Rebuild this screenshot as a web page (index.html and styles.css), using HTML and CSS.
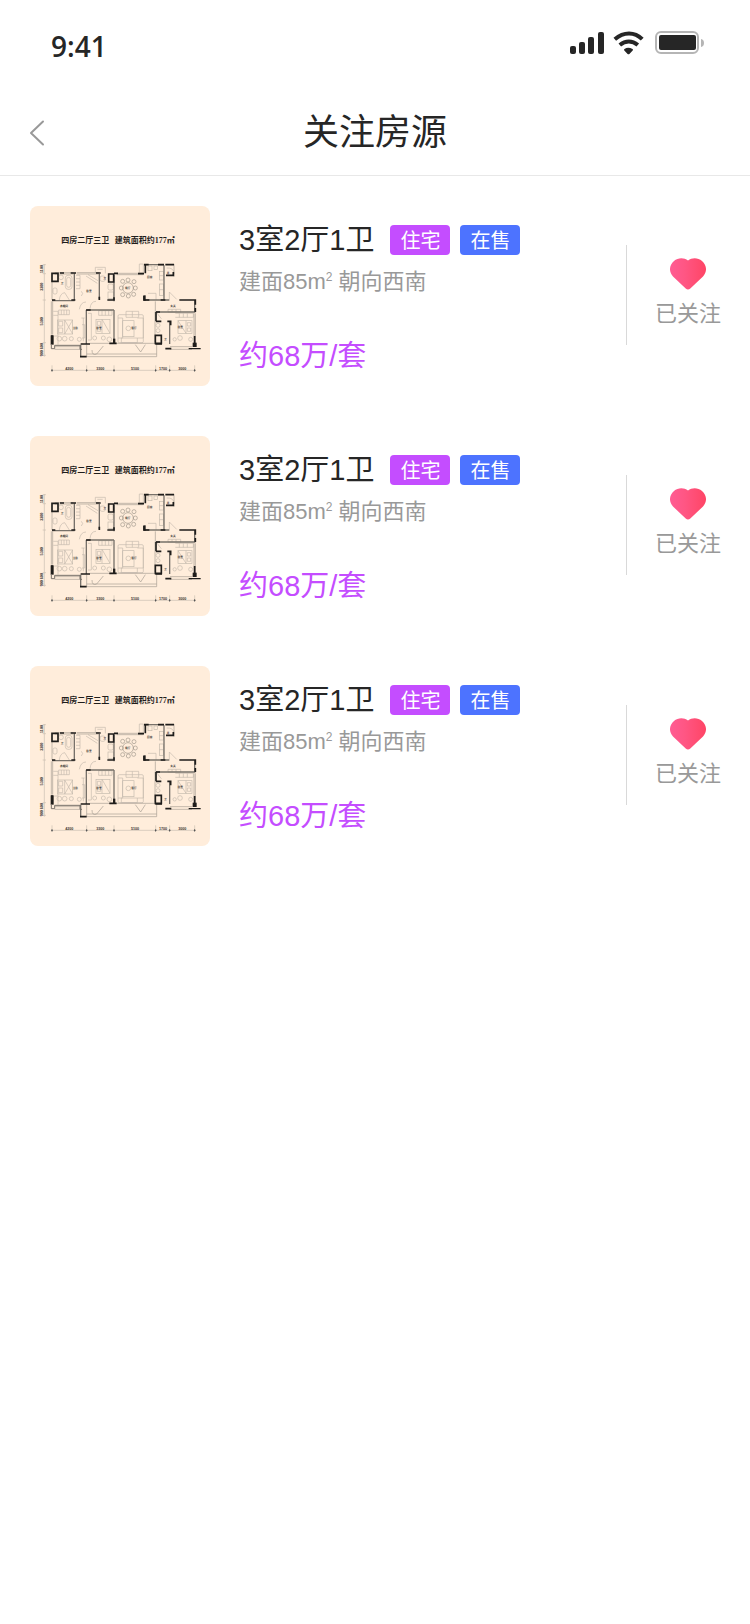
FILE: index.html
```html
<!DOCTYPE html>
<html lang="zh-CN">
<head>
    <meta charset="UTF-8">
    <meta name="viewport" content="width=device-width, initial-scale=1.0">
    <title>关注房源</title>
    <link rel="stylesheet" href="styles.css">
</head>
<body>
    <!-- 公用图形 -->
    <svg class="defs" width="0" height="0" aria-hidden="true">
        <defs>
            <linearGradient id="heartFill" x1="0" y1="0" x2="1" y2="0">
                <stop offset="0" stop-color="#ff5c93"/>
                <stop offset="0.4" stop-color="#ff5684"/>
                <stop offset="1" stop-color="#ff4565"/>
            </linearGradient>
        </defs>
        <symbol id="heart" viewBox="0 0 36 32">
            <path fill="url(#heartFill)" d="M18 2.6C22 -0.6 28 -0.4 32 3C37 7.500 37.300 13.500 33 18.500L20.300 30.600Q18 32.300 15.700 30.600L3 18.500C-1.300 13.500 -1 7.500 4 3C8 -0.400 14 -0.600 18 2.600Z"/>
        </symbol>
        <symbol id="plan" viewBox="30 30 540 540">
            <rect x="30" y="30" width="540" height="540" fill="#ffeddb"/>
            <g class="plan-title">
                <text x="124" y="142">四房二厅三卫</text>
                <text x="284" y="142">建筑面积约177㎡</text>
            </g>
            <!-- 尺寸线 -->
            <g stroke="#c9beb1" stroke-width="2" fill="none">
                <path d="M73 204V482M68 206h10M68 233h10M68 312h10M68 440h10M68 478h10"/>
                <path d="M94 523H526M96 508v20M200 508v20M282 508v20M407 508v20M449 508v20M524 508v20"/>
            </g>
            <g fill="#555" stroke="none">
                <path d="M93 523l3-4 3 4-3 4zM197 523l3-4 3 4-3 4zM279 523l3-4 3 4-3 4zM404 523l3-4 3 4-3 4zM446 523l3-4 3 4-3 4zM521 523l3-4 3 4-3 4z"/>
            </g>
            <g class="plan-size">
                <text x="148" y="521">4200</text>
                <text x="241" y="521">3300</text>
                <text x="345" y="521">5100</text>
                <text x="429" y="521">1700</text>
                <text x="487" y="521">3000</text>
                <text transform="translate(69 219) rotate(-90)">1100</text>
                <text transform="translate(69 272) rotate(-90)">3300</text>
                <text transform="translate(69 376) rotate(-90)">5300</text>
                <text transform="translate(69 461) rotate(-90)">900 600</text>
            </g>
            <!-- 家具 -->
            <g stroke="#c4baad" stroke-width="2" fill="none">
                <rect x="136" y="238" width="20" height="42" rx="8"/>
                <rect x="140" y="244" width="12" height="30" rx="6"/>
                <circle cx="123" cy="244" r="7"/>
                <rect x="99" y="276" width="12" height="18" rx="5"/>
                <path d="M168 238h12v40h-12M168 248h12M168 258h12M168 268h12M198 240l34 22M204 236l30 18M184 286q8 6 0 14M118 312q2 -20 16 -22l14 22"/>
                <rect x="240" y="240" width="16" height="16" rx="6"/>
                <rect x="264" y="264" width="16" height="18" rx="5"/>
                <rect x="264" y="288" width="16" height="20"/>
                <path d="M210 338q2 -22 18 -22M226 214h30v18M226 214v18M232 220h16"/>
                <path d="M116 342h32v14h-32zM124 342v14M132 342v14M140 342v14M178 340q4 -22 20 -22"/>
                <path d="M100 346h14v100M100 358h14M100 420h14"/>
                <rect x="112" y="372" width="46" height="42"/>
                <path d="M116 376h12v14h-12zM116 396h12v14h-12zM134 372v42M134 372l24 42M134 414l24 -42"/>
                <circle cx="118" cy="428" r="7"/><circle cx="134" cy="428" r="7"/><circle cx="154" cy="428" r="6"/><circle cx="178" cy="430" r="6"/>
                <path d="M190 366v70M184 366h10M186 386h8v40h-8"/>
                <rect x="228" y="370" width="42" height="42"/>
                <path d="M246 370v42M246 370l24 42M232 376h10v12h-10zM232 394h10v12h-10zM236 344h40v14h-40zM246 344v14M256 344v14M266 344v14M204 352h10v80h-10"/>
                <circle cx="224" cy="426" r="6"/><circle cx="268" cy="430" r="7"/><circle cx="250" cy="426" r="6"/>
                <rect x="294" y="356" width="76" height="84" rx="4"/>
                <rect x="308" y="374" width="34" height="48"/>
                <path d="M318 346h38v18h-38zM294 366h14v60h-14M352 366h18v60h-18M304 426h48v14h-48zM337 346v18"/>
                <circle cx="325" cy="397" r="7"/>
                <rect x="384" y="210" width="12" height="14"/><rect x="402" y="210" width="10" height="10"/>
                <rect x="418" y="226" width="12" height="26"/><rect x="418" y="264" width="12" height="34"/>
                <path d="M418 239h12M418 281h12M384 292h24v20M358 204h12v28h-12zM440 216q22 -2 22 18M448 310v-22l22 22"/>
                <path d="M444 340h38v8h-38zM456 340v8M468 340v8M466 352h54v12h-54M478 352v12M490 352v12M502 352v12"/>
                <rect x="474" y="374" width="42" height="38"/>
                <path d="M498 374v38M474 374l24 38M502 380h10v10h-10zM502 396h10v10h-10zM410 350l14 18"/>
                <circle cx="414" cy="388" r="6"/><circle cx="414" cy="404" r="6"/><circle cx="512" cy="430" r="6"/><circle cx="480" cy="426" r="7"/><circle cx="464" cy="430" r="5"/>
            </g>
            <!-- 餐桌 -->
            <g stroke="#a0978b" stroke-width="2" fill="none">
                <circle cx="324" cy="276" r="16"/>
                <circle cx="308" cy="256" r="6"/><circle cx="324" cy="252" r="6"/><circle cx="342" cy="257" r="6"/>
                <circle cx="304" cy="276" r="6"/><circle cx="346" cy="276" r="6"/>
                <circle cx="308" cy="296" r="6"/><circle cx="325" cy="300" r="6"/><circle cx="341" cy="295" r="6"/>
            </g>
            <!-- 阳台和窗 -->
            <g stroke="#a69d92" stroke-width="2" fill="none">
                <path d="M104 230h56M170 230h66M104 234h56M170 234h66M290 232h80M290 236h80M462 204v38"/>
                <path d="M96 258v54M94 316v100M98 316v100M406 316v32M405 348v90M522 352v92M526 352v92"/>
                <path d="M104 452h78M104 460h78M210 442h70M290 442h114M450 452h66M450 460h66"/>
                <path d="M200 474H410M200 482H410M200 446v36M410 446v36M216 462q0 18 14 12l20 -24M346 446l16 22 14 -22"/>
            </g>
            <!-- 墙体 -->
            <g stroke="#77716a" stroke-width="4" fill="none">
                <path d="M163 232v80M238 234v76M96 314h68M200 342h82M282 342v100M199 342v102M182 446v36M372 206h60M432 208v104M408 348h118M524 312v36M449 376v68M372 312h76M282 236v80"/>
            </g>
            <g stroke="#1f1d1b" stroke-width="5" fill="none">
                <path d="M96 232h18v24h-18zM266 234h15v24h-15zM406 418h18v24h-18z"/>
                <path d="M120 231h12M152 231h16M228 231h14M282 232h12M376 206v26M372 206h14M414 206h18M372 300v12h16M422 312h14M478 312h48v14M436 206h26M438 238h22v-10M354 233h18"/>
                <path d="M96 312h10M154 312h12M238 302v10M262 312h20v-8M198 342h14M282 430v12h-14M282 442h8M408 348v28M408 376h16M442 376h10v12M408 348h12M526 336v12"/>
                <path d="M96 418v26M182 444h18M196 444h14M180 482h20M406 444h20M436 458h18M524 420v24"/>
            </g>
            <g fill="#1f1d1b">
                <rect x="92" y="418" width="9" height="28"/>
                <rect x="370" y="298" width="7" height="16"/>
                <rect x="279" y="428" width="7" height="16"/>
                <rect x="518" y="440" width="12" height="13"/>
                <path d="M506 456h36v4h-36z"/>
            </g>
            <path d="M94 444v14h10v-10h76v12h6" fill="none" stroke="#77716a" stroke-width="3"/>
            <g class="plan-room">
                <text x="126" y="265">卫</text>
                <text x="207" y="287">卧室</text>
                <text x="254" y="249">卫</text>
                <text x="323" y="280">餐厅</text>
                <text x="389" y="247">厨房</text>
                <text x="444" y="233">井</text>
                <text x="132" y="332">衣帽间</text>
                <text x="166" y="398">主卧</text>
                <text x="237" y="398">卧室</text>
                <text x="342" y="400">客厅</text>
                <text x="459" y="333">玄关</text>
                <text x="436" y="432">卫</text>
                <text x="481" y="396">卧室</text>
            </g>
        </symbol>
    </svg>

    <!-- 状态栏 -->
    <div class="status-bar">
        <span class="time">9:41</span>
        <svg class="status-icons" width="136" height="24" viewBox="0 0 136 24" aria-hidden="true">
            <g fill="#262626">
                <rect x="1" y="15" width="6" height="8" rx="2"/>
                <rect x="10" y="11" width="6" height="12" rx="2"/>
                <rect x="19" y="6" width="6" height="17" rx="2"/>
                <rect x="29" y="1" width="6" height="22" rx="2"/>
                <path d="M55.500 18q3.500 -2.500 8 0q1 .7 .2 1.600l-3.300 3.300q-.9 .8 -1.800 0l-3.300 -3.300q-.8 -.9 .2 -1.600z"/>
            </g>
            <g fill="none" stroke="#262626" stroke-width="4">
                <path d="M45.800 8.200Q52.500 2.500 60 2.500T73.200 8.200"/>
                <path d="M50.800 14Q55 10.500 59.800 10.500T68.800 14"/>
            </g>
            <rect x="87" y="1" width="42" height="21" rx="5" fill="none" stroke="#b5b5b5" stroke-width="2"/>
            <rect x="90" y="4" width="37" height="15" rx="2" fill="#262626"/>
            <path d="M132 8q3 .6 3 4t-3 4z" fill="#b5b5b5"/>
        </svg>
    </div>

    <header class="nav">
        <button class="back" type="button" aria-label="返回">
            <svg width="16" height="26" viewBox="0 0 16 26" fill="none" stroke="#999" stroke-width="2" stroke-linecap="round" stroke-linejoin="round">
                <path d="M14 1.500L2 13l12 11.500"/>
            </svg>
        </button>
        <h1>关注房源</h1>
    </header>

    <main class="list">
        <article class="house">
            <svg class="cover" role="img" aria-label="户型图"><use href="#plan"/></svg>
            <div class="info">
                <div class="info-head">
                    <h2>3室2厅1卫</h2>
                    <span class="tag tag-type">住宅</span>
                    <span class="tag tag-sale">在售</span>
                </div>
                <p class="desc">建面85m<sup>2</sup> 朝向西南</p>
                <p class="price">约68万/套</p>
            </div>
            <button class="follow" type="button">
                <svg class="heart" aria-hidden="true"><use href="#heart"/></svg>
                <span>已关注</span>
            </button>
        </article>

        <article class="house">
            <svg class="cover" role="img" aria-label="户型图"><use href="#plan"/></svg>
            <div class="info">
                <div class="info-head">
                    <h2>3室2厅1卫</h2>
                    <span class="tag tag-type">住宅</span>
                    <span class="tag tag-sale">在售</span>
                </div>
                <p class="desc">建面85m<sup>2</sup> 朝向西南</p>
                <p class="price">约68万/套</p>
            </div>
            <button class="follow" type="button">
                <svg class="heart" aria-hidden="true"><use href="#heart"/></svg>
                <span>已关注</span>
            </button>
        </article>

        <article class="house">
            <svg class="cover" role="img" aria-label="户型图"><use href="#plan"/></svg>
            <div class="info">
                <div class="info-head">
                    <h2>3室2厅1卫</h2>
                    <span class="tag tag-type">住宅</span>
                    <span class="tag tag-sale">在售</span>
                </div>
                <p class="desc">建面85m<sup>2</sup> 朝向西南</p>
                <p class="price">约68万/套</p>
            </div>
            <button class="follow" type="button">
                <svg class="heart" aria-hidden="true"><use href="#heart"/></svg>
                <span>已关注</span>
            </button>
        </article>
    </main>
</body>
</html>
```
FILE: styles.css
```css
* {
    box-sizing: border-box;
}
body {
    margin: 0;
    background: #fff;
    color: #262626;
    font-family: "Liberation Sans", "Noto Sans CJK SC", sans-serif;
}
h1, h2, p {
    margin: 0;
    font-weight: 400;
}
button {
    padding: 0;
    border: none;
    background: none;
    font: inherit;
    cursor: pointer;
}
.defs {
    position: absolute;
}
.status-bar {
    display: flex;
    justify-content: space-between;
    height: 88px;
    padding: 31px 45px 0 51px;
}
.time {
    font-family: "Open Sans", sans-serif;
    font-size: 28px;
    line-height: 30px;
    font-weight: 600;
}
.nav {
    display: grid;
    grid-template-columns: 60px 1fr 60px;
    align-items: center;
    height: 88px;
    padding-top: 2px;
    border-bottom: 1px solid #e8e8e8;
}
.back {
    height: 60px;
    padding-left: 29px;
    text-align: left;
}
.back svg {
    display: block;
}
.nav h1 {
    font-size: 36px;
    line-height: 48px;
    text-align: center;
}
.list {
    display: flex;
    flex-direction: column;
    gap: 50px;
    padding: 30px 29px 30px 30px;
}
.house {
    display: flex;
    align-items: center;
}
.cover {
    flex: none;
    width: 180px;
    height: 180px;
    border-radius: 8px;
}
.info {
    flex: 1;
    align-self: flex-start;
    padding: 14px 0 0 29px;
}
.info-head {
    display: flex;
    align-items: center;
    gap: 10px;
}
.info-head h2 {
    margin-right: 6px;
    font-size: 29px;
    line-height: 40px;
}
.tag {
    width: 60px;
    padding-top: 2px;
    border-radius: 4px;
    color: #fff;
    font-size: 20px;
    line-height: 28px;
    text-align: center;
}
.tag-type {
    background: #c44dff;
}
.tag-sale {
    background: #4d73ff;
}
.desc {
    margin-top: 6px;
    color: #999;
    font-size: 22px;
    line-height: 32px;
}
.desc sup {
    font-size: 12px;
    line-height: 0;
}
.price {
    margin-top: 38px;
    color: #c44dff;
    font-size: 29px;
    line-height: 40px;
}
.follow {
    display: flex;
    flex-direction: column;
    align-items: center;
    justify-content: center;
    gap: 8px;
    height: 100px;
    margin-bottom: 2px;
    padding: 0 0 2px 28px;
    border-left: 1px solid #d9d9d9;
    color: #999;
    font-size: 22px;
    line-height: 32px;
}
.heart {
    width: 36px;
    height: 32px;
}

/* 户型图文字 */
.plan-title {
    fill: #1f1d1b;
    font-family: "Liberation Serif", "Noto Sans CJK SC", serif;
    font-size: 24px;
    font-weight: 700;
}
.plan-size {
    fill: #3a3734;
    font-family: "Liberation Sans", sans-serif;
    font-size: 11px;
    font-weight: 700;
    text-anchor: middle;
}
.plan-room {
    fill: #3a3734;
    font-family: "Noto Sans CJK SC", sans-serif;
    font-size: 8px;
    font-weight: 700;
    text-anchor: middle;
}
```
